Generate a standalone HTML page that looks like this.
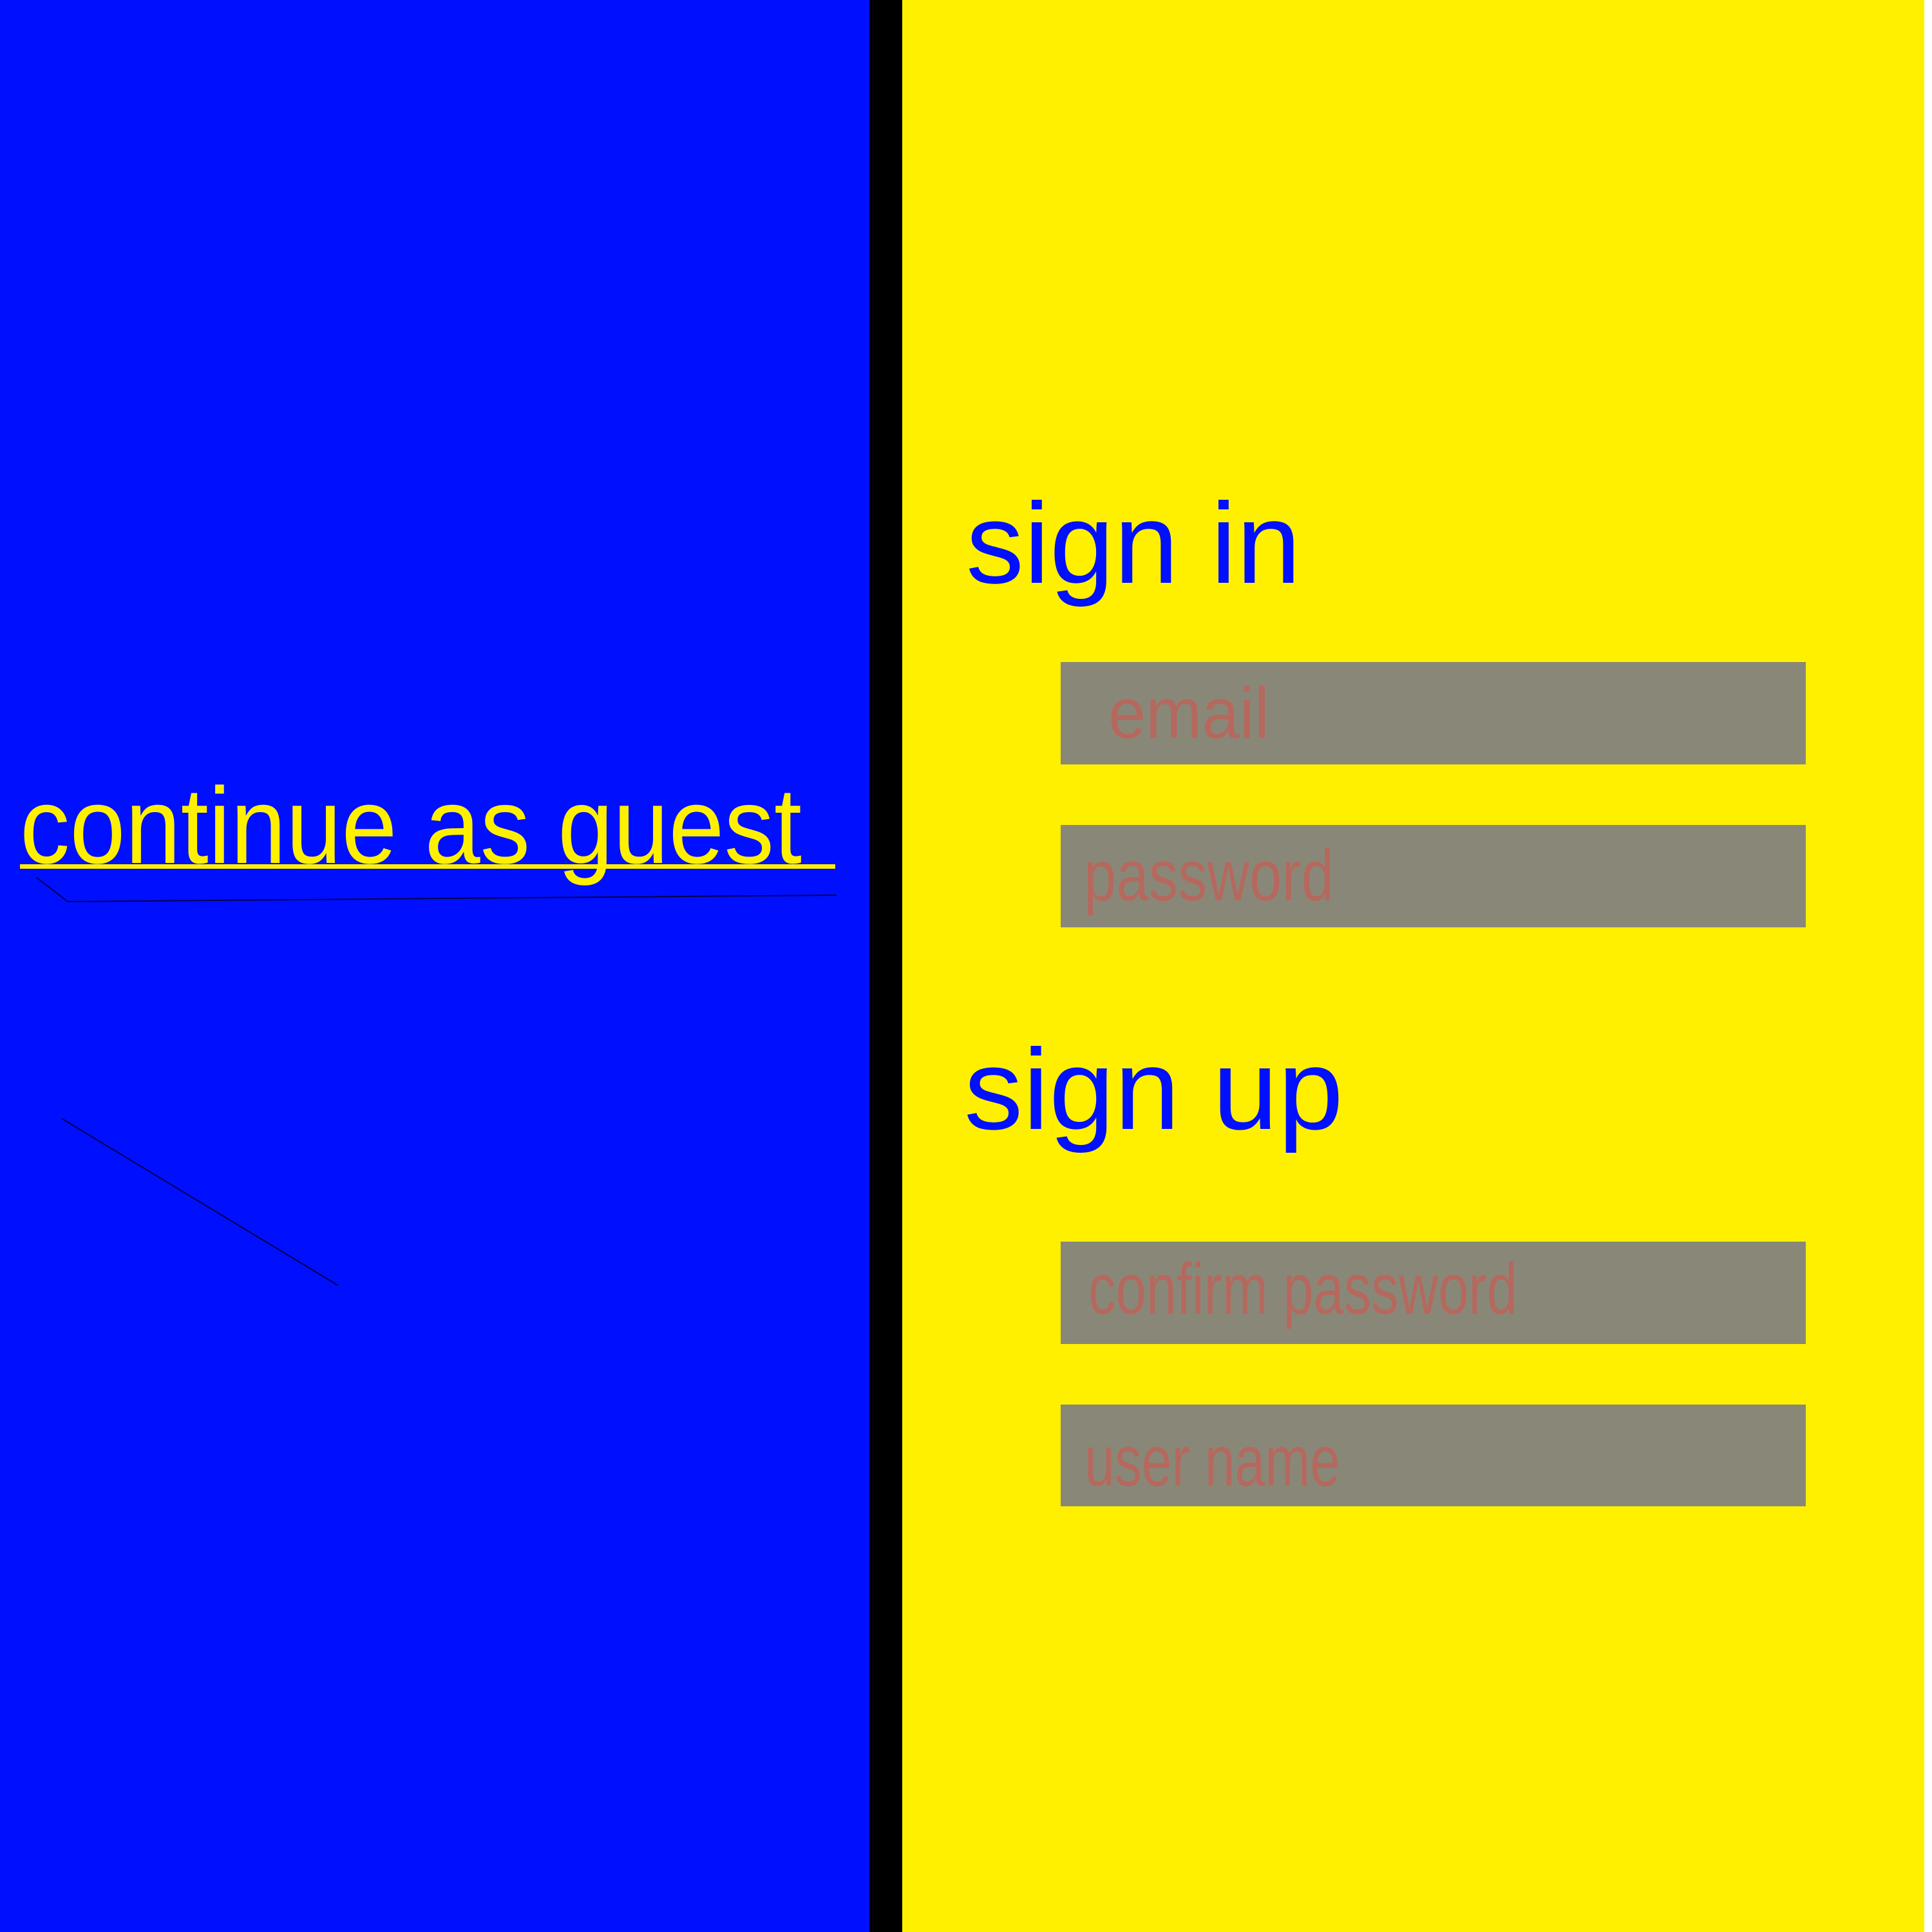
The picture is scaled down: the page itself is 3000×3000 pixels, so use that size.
<!DOCTYPE html>
<html><head><meta charset="utf-8"><style>
html,body{margin:0;padding:0;background:#fff;}
svg{display:block;}
text{font-family:"Liberation Sans",sans-serif;}
</style></head><body>
<svg width="3000" height="3000" viewBox="0 0 3000 3000" xmlns="http://www.w3.org/2000/svg">
<rect x="0" y="0" width="1350" height="3000" fill="#0010ff"/>
<rect x="1350" y="0" width="51" height="3000" fill="#000"/>
<rect x="1401" y="0" width="1587" height="3000" fill="#fff000"/>

<text x="31" y="1340" font-size="168" fill="#fff000" textLength="1214" lengthAdjust="spacingAndGlyphs">continue as guest</text>
<rect x="31" y="1342" width="1266" height="7" fill="#fff000"/>
<polyline points="56,1362 105,1400 1299,1390" fill="none" stroke="#000050" stroke-width="2"/>
<line x1="96" y1="1737" x2="525" y2="1996" stroke="#000050" stroke-width="2"/>

<text x="1500" y="905" font-size="178" fill="#0010ff" textLength="520" lengthAdjust="spacingAndGlyphs">sign in</text>
<rect x="1647" y="1028" width="1157" height="159" fill="#898878"/>
<text x="1721" y="1146" font-size="112" fill="#b5695e" textLength="250" lengthAdjust="spacingAndGlyphs">email</text>
<rect x="1647" y="1281" width="1157" height="159" fill="#898878"/>
<text x="1683" y="1398" font-size="112" fill="#b5695e" textLength="388" lengthAdjust="spacingAndGlyphs">password</text>

<text x="1497" y="1753" font-size="178" fill="#0010ff" textLength="589" lengthAdjust="spacingAndGlyphs">sign up</text>
<rect x="1647" y="1928" width="1157" height="159" fill="#898878"/>
<text x="1690" y="2040" font-size="112" fill="#b5695e" textLength="666" lengthAdjust="spacingAndGlyphs">confirm password</text>
<rect x="1647" y="2181" width="1157" height="158" fill="#898878"/>
<text x="1684" y="2307" font-size="112" fill="#b5695e" textLength="397" lengthAdjust="spacingAndGlyphs">user name</text>
</svg>
</body></html>
